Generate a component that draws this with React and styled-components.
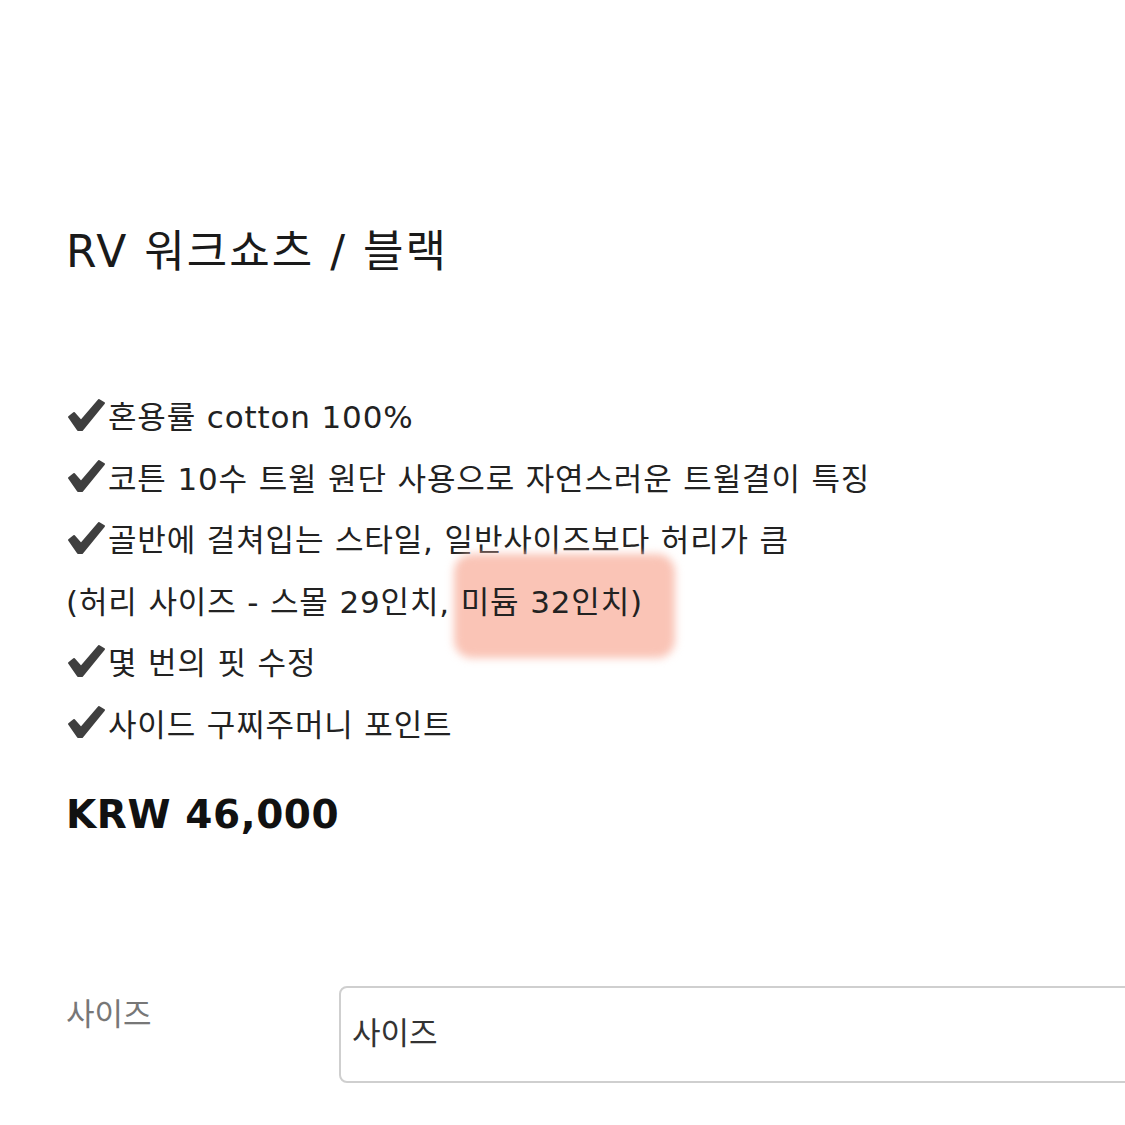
import styled, { createGlobalStyle } from "styled-components";

const GlobalStyle = createGlobalStyle`
  html, body {
    margin: 0;
    padding: 0;
    background: #fff;
  }
  body {
    font-family: "DejaVu Sans", "Noto Sans CJK KR", sans-serif;
    color: #222;
  }
`;

const features = [
  { check: true, text: "혼용률 cotton 100%" },
  { check: true, text: "코튼 10수 트윌 원단 사용으로 자연스러운 트윌결이 특징" },
  { check: true, text: "골반에 걸쳐입는 스타일, 일반사이즈보다 허리가 큼" },
  { check: false, text: "(허리 사이즈 - 스몰 29인치, ", mark: "미듐 32인치)" },
  { check: true, text: "몇 번의 핏 수정" },
  { check: true, text: "사이드 구찌주머니 포인트" },
];

const Check = () => (
  <CheckIcon viewBox="0 0 40 34" aria-hidden="true">
    <path
      d="M3 19 L8 15 L15 23 L33 2 L38 5 L16 32 L12 32 Z"
      fill="#3f3f3f"
      stroke="#3f3f3f"
      strokeWidth="2"
      strokeLinejoin="round"
    />
  </CheckIcon>
);

export default function App() {
  return (
    <>
      <GlobalStyle />
      <Page>
        <Title>RV 워크쇼츠 / 블랙</Title>
        <FeatureList>
          {features.map((f, i) => (
            <Feature key={i}>
              {f.check && <Check />}
              <span>{f.text}</span>
              {f.mark && <Marked>{f.mark}</Marked>}
            </Feature>
          ))}
        </FeatureList>
        <Price>KRW 46,000</Price>
        <OptionRow>
          <OptionLabel>사이즈</OptionLabel>
          <SelectBox>사이즈</SelectBox>
        </OptionRow>
      </Page>
    </>
  );
}

const Page = styled.div`
  width: 1125px;
  height: 1125px;
  overflow: hidden;
  padding: 222px 0 0 66px;
  box-sizing: border-box;
`;

const Title = styled.h1`
  margin: 0;
  font-size: 44px;
  font-weight: 400;
  line-height: 60px;
  color: #1a1a1a;
  letter-spacing: 2px;
`;

const FeatureList = styled.ul`
  list-style: none;
  margin: 102px 0 0;
  padding: 0;
  display: flex;
  flex-direction: column;
`;

const Feature = styled.li`
  display: flex;
  align-items: center;
  height: 61.5px;
  font-size: 31px;
  color: #222;
  white-space: pre;
  letter-spacing: 0.85px;
`;

const CheckIcon = styled.svg`
  width: 40px;
  height: 34px;
  margin-right: 2px;
  flex: none;
`;

const Marked = styled.span`
  position: relative;
  z-index: 0;

  &::before {
    content: "";
    position: absolute;
    z-index: -1;
    left: -7px;
    right: -32px;
    top: -23px;
    bottom: -36px;
    background: #fac4b6;
    border-radius: 18px;
    filter: blur(4px);
  }
`;

const Price = styled.div`
  margin-top: 32px;
  font-size: 39px;
  font-weight: 700;
  color: #111;
  line-height: 60px;
  letter-spacing: 0.6px;
`;

const OptionRow = styled.div`
  display: flex;
  align-items: flex-start;
  margin-top: 141px;
`;

const OptionLabel = styled.div`
  width: 273px;
  flex: none;
  font-size: 31px;
  color: #777;
  line-height: 40px;
  padding-top: 8px;
`;

const SelectBox = styled.div`
  flex: none;
  width: 820px;
  height: 97px;
  box-sizing: border-box;
  border: 2px solid #cfcfcf;
  border-radius: 8px;
  padding: 22px 11px;
  font-size: 31px;
  color: #333;
  line-height: 46px;
`;
